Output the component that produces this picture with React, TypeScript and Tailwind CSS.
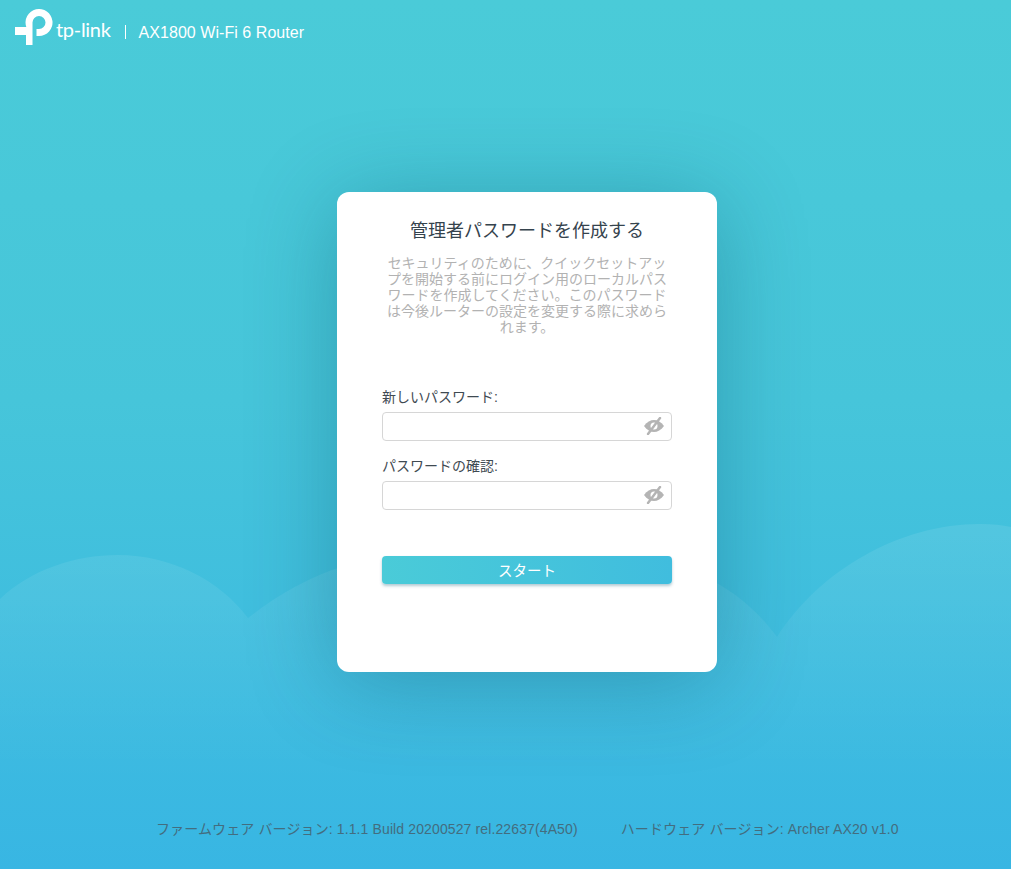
import React from 'react'

function EyeOff() {
  return (
    <svg width="22" height="18" viewBox="0 0 22 18" className="absolute right-[6px] top-[4px]">
      <path d="M1 9 C4 4.800 7.500 3 11 3 C14.500 3 18 4.800 21 9 C18 13.200 14.500 15 11 15 C7.500 15 4 13.200 1 9 Z" fill="#b4b4b4" />
      <circle cx="11" cy="9" r="3.500" fill="#ffffff" />
      <path d="M17 1 L5 17" stroke="#b4b4b4" strokeWidth="2.400" strokeLinecap="round" />
    </svg>
  )
}

function Logo() {
  return (
    <svg width="38" height="36" viewBox="15 9 38 36" className="shrink-0">
      <path d="M15 27 H26.300 A13.500 13.500 0 1 1 39 36 H36.500 V29 H39 A6.500 6.500 0 1 0 32.500 22.500 V45 H26 V35 H15 Z" fill="#ffffff" />
    </svg>
  )
}

function PasswordField({ label }: { label: string }) {
  return (
    <div>
      <label className="block text-[14px] leading-[20px] text-[#3f4a52] mb-[5px]">{label}</label>
      <div className="relative h-[29px] rounded-[4px] border border-[#d6d6d6] bg-white">
        <EyeOff />
      </div>
    </div>
  )
}

export default function App() {
  return (
    <div
      className="relative h-[869px] overflow-hidden flex flex-col bg-gradient-to-b from-[#4acbd8] via-[#46c5da] via-46% to-[#38b6e3]"
      style={{ fontFamily: '"Liberation Sans", "Noto Sans CJK JP", sans-serif' }}
    >
      {/* clouds */}
      <svg width="1011" height="869" viewBox="0 0 1011 869" className="absolute inset-0">
        <defs>
          <linearGradient id="cloud" x1="0" y1="520" x2="0" y2="780" gradientUnits="userSpaceOnUse">
            <stop offset="0" stopColor="#ffffff" stopOpacity="0.09" />
            <stop offset="1" stopColor="#ffffff" stopOpacity="0" />
          </linearGradient>
        </defs>
        <path d="M0 599 C30 570 75 555 118 555 C170 555 220 580 248 618 C290 585 340 560 400 555 L640 555 C710 570 750 600 777 637 C820 570 900 524 980 524 C992 524 1002 525 1011 527 L1011 780 L0 780 Z" fill="url(#cloud)" />
      </svg>

      <header className="relative flex items-start h-[64px] pl-[15px] pt-[9px] text-white">
        <Logo />
        <span className="ml-[3px] mt-[8px] text-[20px] leading-[24px] tracking-[-0.3px]" style={{ fontFamily: 'Lato, sans-serif' }}>tp-link</span>
        <span className="ml-[14px] mt-[16px] w-px h-[14px] bg-white"></span>
        <span className="ml-[13px] mt-[15px] text-[16px] leading-[18px] tracking-[0.05px]">AX1800 Wi-Fi 6 Router</span>
      </header>

      <main className="relative flex-1 flex justify-center pl-[43px] pt-[128px]">
        <div className="w-[380px] h-[480px] rounded-[12px] bg-white px-[45px] pt-[27px] shadow-[0_10px_90px_rgba(0,70,90,0.32)]">
          <h1 className="text-[18px] leading-[24px] text-center text-[#35434d]">管理者パスワードを作成する</h1>
          <p className="mt-[12px] text-[14px] leading-[16px] text-center text-[#b2b2b2]">
            セキュリティのために、クイックセットアップを開始する前にログイン用のローカルパスワードを作成してください。このパスワードは今後ルーターの設定を変更する際に求められます。
          </p>
          <div className="mt-[52px] flex flex-col gap-[15px]">
            <PasswordField label="新しいパスワード:" />
            <PasswordField label="パスワードの確認:" />
          </div>
          <button className="mt-[46px] w-full h-[28px] pt-[3px] rounded-[4px] bg-gradient-to-r from-[#4acbd8] to-[#40bdde] text-white text-[14.500px] shadow-[0_2px_3px_rgba(0,80,110,0.3)]">
            スタート
          </button>
        </div>
      </main>

      <footer className="relative flex gap-[43px] pl-[156px] pb-[30px] text-[14px] leading-[20px] tracking-[0.12px] text-[#436d7f]">
        <span>ファームウェア バージョン: 1.1.1 Build 20200527 rel.22637(4A50)</span>
        <span>ハードウェア バージョン: Archer AX20 v1.0</span>
      </footer>
    </div>
  )
}
